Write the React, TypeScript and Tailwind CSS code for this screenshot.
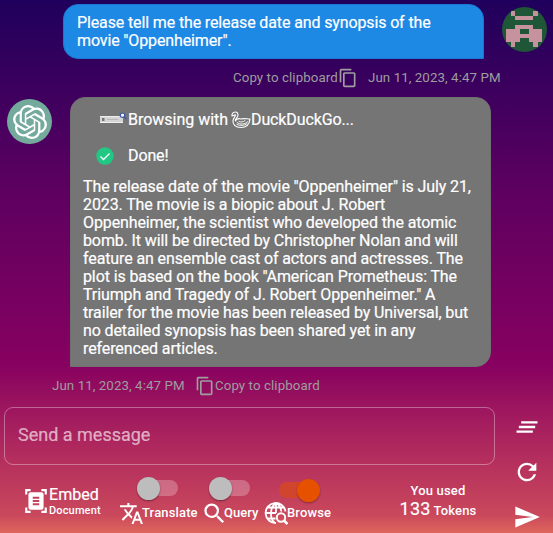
import React from "react";
import { MdContentCopy, MdClearAll, MdRefresh, MdSend, MdTranslate, MdSearch, MdDocumentScanner } from "react-icons/md";
import { SiOpenai } from "react-icons/si";

function Identicon() {
  return (
    <svg viewBox="0 0 45 45" className="size-[45px] rounded-full bg-[#205638]" fill="#c6929d" shapeRendering="crispEdges">
      <path d="M9 4h4v5h18V4h5v5h-5v4H13V9H9zM13 18h18v4h9v13h-4v5h-5v-5h-4v-4h-9v4h-5v5H9v-5H4V22h9z" />
      <path fill="#205638" d="M18 22h9v5h-9z" />
    </svg>
  );
}

function Swan() {
  return (
    <svg viewBox="0 0 20 20" className="ml-[3px] size-5 shrink-0" fill="none" stroke="white" strokeWidth="1.100" strokeLinejoin="round" strokeLinecap="round">
      <path d="M1 4.500C2 1.500 6.500 1 7 4.500C7.300 7.500 4 8.500 4.300 11C5.500 9 8 8.300 10 9C13 8 16 9 19 9C18.500 14 15.500 17.500 10 17.500C4 17.500 1.500 14 2 10.500C2.500 8 4.500 6.500 4.500 4.700L1 6z" />
      <path d="M6 12.500c3 2.500 8 2 11-1M8 11.500c2 1 4 .5 6-.8M6 14.500c3 1.500 7 1.300 10-.7" strokeWidth="0.900" />
    </svg>
  );
}

function GlobeSearch() {
  return (
    <svg viewBox="0 0 24 24" className="size-6 shrink-0" fill="none" stroke="white" strokeWidth="1.800">
      <path d="M21.500 10.500A10 10 0 1 0 12 22M4 6.500h16M2 12h10M3.500 17.500h8M12 2v10M12 2C5.500 6 5.500 18 11 22M12 2c3.500 2 5 5 5.300 8.500" />
      <circle cx="17" cy="16.500" r="4.200" strokeWidth="2" />
      <path d="M20 19.500l3.500 3.500" strokeWidth="2.600" />
    </svg>
  );
}

function BrowserSearch() {
  return (
    <svg viewBox="0 0 28 16" className="h-4 w-7 shrink-0">
      <rect x="1" y="4" width="23" height="7" fill="#d5d5d5" />
      <path d="M1 4.500h19M1 10.500h23" stroke="#eeeeee" />
      <path d="M3 6h2.500v3H3z" fill="#777" />
      <path d="M8 7.500h11" stroke="#b9b9b9" />
      <circle cx="23.500" cy="3.200" r="2.200" fill="#eef4ff" stroke="#3f57a6" strokeWidth="1.100" />
      <path d="M25.200 5l2.300 2.200" stroke="#3f57a6" strokeWidth="1.300" />
    </svg>
  );
}

function Toggle({ on = false }: { on?: boolean }) {
  return on ? (
    <div className="flex h-4 w-[41px] items-center justify-end rounded-full bg-[#d1452f]">
      <span className="size-[23px] shrink-0 rounded-full bg-[#e65100] shadow-[0_1px_2px_#0005]" />
    </div>
  ) : (
    <div className="flex h-4 w-[41px] items-center rounded-full bg-white/25">
      <span className="size-[23px] shrink-0 rounded-full bg-[#bdbdbd] shadow-[0_1px_2px_#0006]" />
    </div>
  );
}

export default function App() {
  return (
    <main className="h-[533px] w-[553px] overflow-hidden bg-[linear-gradient(180deg,#1f005c_0px,#5b0060_182px,#870160_365px,#ac255e_440px,#ca485c_515px,#e16b5c_536px)] font-[Roboto,sans-serif] text-white">
      <section className="flex h-[97px] items-start pt-1">
        <div className="ml-[63px] w-[421px]">
          <div className="h-[55px] rounded-[15px] rounded-br-none border border-[#1976d2] bg-[#1e88e5] px-[13px] pt-[8.500px] text-[16px] leading-[18px] tracking-[-0.130px] [-webkit-text-stroke:0.200px]">
            <p className="w-[370px] whitespace-nowrap">Please tell me the release date and synopsis of the<br />movie "Oppenheimer".</p>
          </div>
          <div className="ml-[170px] flex h-[38px] w-[270px] items-center text-[13.300px] whitespace-nowrap text-[#9e9e9e]">
            <span className="w-[105px] tracking-[0.080px]">Copy to clipboard</span>
            <MdContentCopy className="size-5 shrink-0" />
            <span className="ml-[10px] tracking-[0.080px]">Jun 11, 2023, 4:47 PM</span>
          </div>
        </div>
        <div className="mt-[3px] ml-[18px]"><Identicon /></div>
      </section>

      <section className="flex h-[270px] items-start">
        <div className="mt-[2px] ml-[7px] flex size-[45px] items-center justify-center rounded-full bg-[#74aa9c]">
          <SiOpenai className="size-[34px]" />
        </div>
        <div className="ml-[18px] h-[270px] w-[421px] rounded-[15px] rounded-bl-none border border-[#707070] bg-[#757575] px-3 text-[16px] leading-[18px] tracking-[-0.115px] [-webkit-text-stroke:0.200px]">
          <div className="mt-[13px] ml-4 flex h-[18px] items-center whitespace-nowrap">
            <BrowserSearch /><span className="ml-[1px] w-[100px] tracking-[-0.020px]">Browsing with</span>
            <Swan /><span>DuckDuckGo...</span>
          </div>
          <div className="mt-[18px] ml-[13px] flex h-[18px] items-center">
            <svg viewBox="0 0 18 18" className="size-[18px]"><circle cx="9" cy="9" r="8.700" fill="#21c884" /><path d="M4.500 9.500l3 3 6-6" fill="none" stroke="white" strokeWidth="1.300" /></svg>
            <span className="ml-[14px]">Done!</span>
          </div>
          <p className="mt-[13px] whitespace-nowrap">
            The release date of the movie "Oppenheimer" is July 21,<br />2023. The movie is a biopic about J. Robert<br />Oppenheimer, the scientist who developed the atomic<br />bomb. It will be directed by Christopher Nolan and will<br />feature an ensemble cast of actors and actresses. The<br />plot is based on the book "American Prometheus: The<br />Triumph and Tragedy of J. Robert Oppenheimer." A<br />trailer for the movie has been released by Universal, but<br />no detailed synopsis has been shared yet in any<br />referenced articles.
          </p>
        </div>
      </section>

      <div className="flex h-[40px] items-center pb-[3px] pl-[52px] text-[13.300px] whitespace-nowrap text-[#9e9e9e]">
        <span className="w-[143px] tracking-[0.080px]">Jun 11, 2023, 4:47 PM</span>
        <MdContentCopy className="size-5" />
        <span className="tracking-[0.080px]">Copy to clipboard</span>
      </div>

      <footer className="flex h-[126px]">
        <div className="ml-1 w-[491px]">
          <div className="flex h-[58px] items-center rounded-[9px] border border-white/35 px-[13px] pb-[3px] text-[18px] text-white/60 [-webkit-text-stroke:0.200px]">Send a message</div>
          <div className="flex h-[68px]">
            <div className="flex w-[116px] shrink-0 pt-[21px] pl-[19px]">
              <MdDocumentScanner className="mt-[2px] size-[26px] shrink-0" />
              <div>
                <p className="text-[16px] leading-[17px] tracking-[0.050px] [-webkit-text-stroke:0.200px]">Embed</p>
                <p className="pt-px text-[11px] leading-[14px] font-medium tracking-[0.150px]">Document</p>
              </div>
            </div>
            <div className="w-[80px] shrink-0 pt-[15px]">
              <div className="ml-[17px]"><Toggle /></div>
              <div className="flex h-[34px] items-center text-[13px] font-medium tracking-[0.150px]"><MdTranslate className="-ml-px size-[25px] shrink-0" /><span className="-ml-[2px]">Translate</span></div>
            </div>
            <div className="w-[64px] shrink-0 pt-[15px]">
              <div className="ml-[9px]"><Toggle /></div>
              <div className="flex h-[34px] items-center text-[13px] font-medium tracking-[0.050px]"><MdSearch className="ml-px mr-[-4px] size-[27px] shrink-0" />Query</div>
            </div>
            <div className="w-[72px] shrink-0 pt-[17px]">
              <div className="ml-[15px]"><Toggle on /></div>
              <div className="flex h-[30px] items-center text-[13px] font-medium tracking-[0.150px]"><GlobeSearch /><span className="-ml-px">Browse</span></div>
            </div>
            <div className="w-[204px] shrink-0 pt-[17px] text-center text-[13px] leading-[17px] font-medium tracking-[0.150px]">
              <p>You used</p>
              <p className="leading-[19px]"><span className="text-[18px] font-normal [-webkit-text-stroke:0.200px]">133</span> Tokens</p>
            </div>
          </div>
        </div>
        <div className="ml-[18px] flex w-7 flex-col items-center pt-[6px]">
          <MdClearAll className="size-7" />
          <MdRefresh className="mt-[17px] size-7" />
          <MdSend className="mt-[17px] size-7 shrink-0" />
        </div>
      </footer>
    </main>
  );
}
